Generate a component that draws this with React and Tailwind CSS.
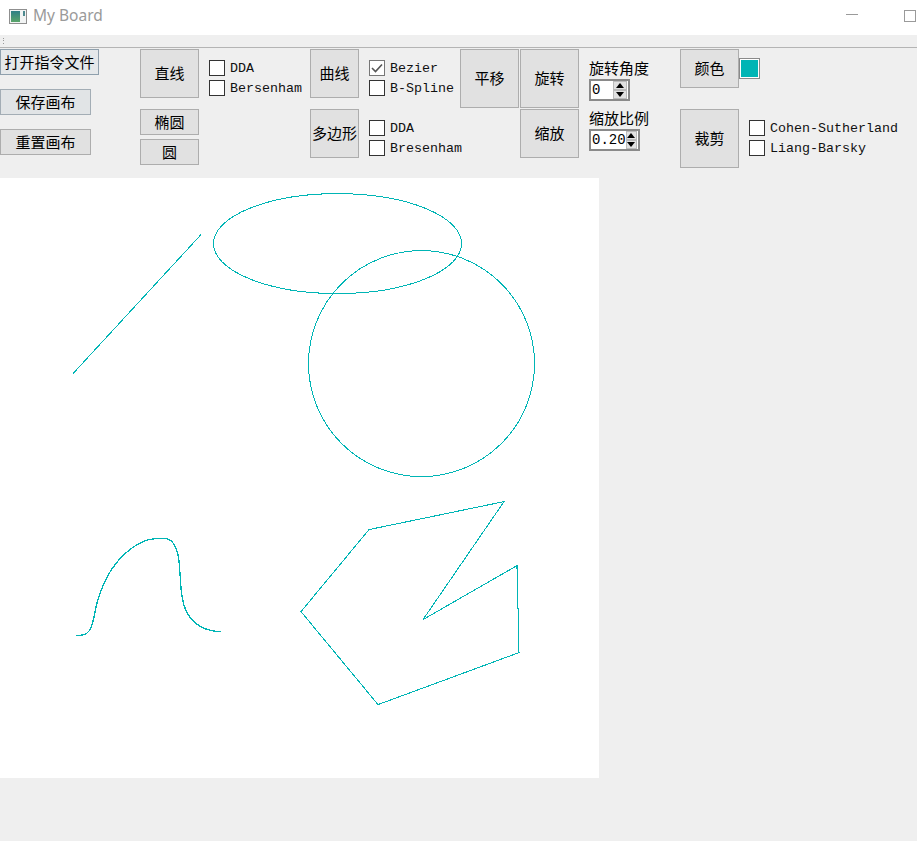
const zh = 'text-[15px] leading-none text-black [font-family:"Noto_Sans_CJK_SC",sans-serif]';

function Btn({ children, className = '' }) {
    return (
        <button className={`flex items-center justify-center border border-[#adadad] bg-[#e1e1e1] pb-[2px] ${zh} ${className}`}>
            {children}
        </button>
    );
}

function Check({ label, checked = false }) {
    return (
        <div className="flex h-5 items-center gap-[5px]">
            <span className={`flex h-4 w-4 shrink-0 items-center justify-center border bg-white ${checked ? 'border-[#777]' : 'border-[#333]'}`}>
                {checked && (
                    <svg width="12" height="10" viewBox="0 0 12 10" fill="none">
                        <path d="M1 5 L4.5 8.5 L11 1.5" stroke="#555" strokeWidth="1.6" />
                    </svg>
                )}
            </span>
            <span className='whitespace-nowrap pt-[2px] text-[13.33px] leading-none text-[#111] [font-family:"Liberation_Mono",monospace]'>{label}</span>
        </div>
    );
}

function Spin({ value, className = '' }) {
    return (
        <div className={`flex h-[22px] items-center justify-between border-2 border-[#8a8a8a] bg-white pr-px ${className}`}>
            <span className='pl-[1px] text-[14px] leading-none text-black [font-family:"Liberation_Mono",monospace]'>{value}</span>
            <span className="flex w-[14px] flex-col">
                <span className="flex h-[9px] items-center justify-center border border-[#bbb] bg-[#e1e1e1]">
                    <span className="h-0 w-0 border-x-[4px] border-b-[5px] border-x-transparent border-b-black" />
                </span>
                <span className="flex h-[9px] items-center justify-center border border-[#bbb] bg-[#e1e1e1]">
                    <span className="h-0 w-0 border-x-[4px] border-t-[5px] border-x-transparent border-t-black" />
                </span>
            </span>
        </div>
    );
}

export default function App() {
    return (
        <div className="flex h-[841px] w-[917px] flex-col overflow-hidden bg-[#efefef]">
            {/* Title bar */}
            <div className="flex h-[35px] shrink-0 items-center bg-white pb-[3px] pl-[9px] pr-px">
                <svg width="18" height="15" viewBox="0 0 18 15" className="shrink-0">
                    <defs>
                        <linearGradient id="ic" x1="0" y1="0" x2="0" y2="1">
                            <stop offset="0" stopColor="#2f7f86" />
                            <stop offset="1" stopColor="#5aa56a" />
                        </linearGradient>
                    </defs>
                    <rect x="0.5" y="0.5" width="17" height="14" fill="#f2f4f4" stroke="#8f8f8f" />
                    <rect x="2" y="2" width="9" height="11" fill="url(#ic)" />
                    <rect x="14" y="2" width="2" height="5" fill="#4d8a90" />
                </svg>
                <span className='ml-[6px] text-[15.5px] leading-none text-[#9a9a9a] [font-family:"Noto_Sans",sans-serif]'>My Board</span>
                <span className="ml-auto mr-[46px] -mt-1 h-px w-3 bg-[#9a9a9a]" />
                <span className="-mt-px h-3 w-3 border border-[#9a9a9a]" />
            </div>

            {/* Tool strip */}
            <div className="flex h-[13px] shrink-0 items-center border-b border-[#b4b4b4] pl-[3px]">
                <span className="flex flex-col gap-px">
                    <span className="h-px w-px bg-[#999]" />
                    <span className="h-px w-px bg-[#999]" />
                    <span className="mt-px h-px w-px bg-[#999]" />
                </span>
            </div>

            {/* Controls */}
            <div className="flex h-[130px] shrink-0 items-start pt-[1px]">
                <div className="flex w-[140px] shrink-0 flex-col items-start gap-[14px]">
                    <button className={`flex h-[26px] w-[99px] items-center justify-center border border-[#8fa0ad] bg-[#e5e8ea] pb-[2px] ${zh}`}>打开指令文件</button>
                    <button className={`flex h-[26px] w-[91px] items-center justify-center border border-[#a3adb5] bg-[#e1e4e6] pb-[2px] ${zh}`}>保存画布</button>
                    <Btn className="h-[26px] w-[91px]">重置画布</Btn>
                </div>

                <div className="flex w-[59px] shrink-0 flex-col">
                    <Btn className="h-[49px]">直线</Btn>
                    <Btn className="mt-[11px] h-[26px]">椭圆</Btn>
                    <Btn className="mt-[4px] h-[26px]">圆</Btn>
                </div>

                <div className="ml-[10px] w-[101px] shrink-0 pt-[9px]">
                    <Check label="DDA" />
                    <Check label="Bersenham" />
                </div>

                <div className="flex w-[49px] shrink-0 flex-col gap-[11px]">
                    <Btn className="h-[49px]">曲线</Btn>
                    <Btn className="h-[49px]">多边形</Btn>
                </div>

                <div className="ml-[10px] flex w-[91px] shrink-0 flex-col gap-[20px] pt-[9px]">
                    <div>
                        <Check label="Bezier" checked />
                        <Check label="B-Spline" />
                    </div>
                    <div>
                        <Check label="DDA" />
                        <Check label="Bresenham" />
                    </div>
                </div>

                <Btn className="h-[59px] w-[59px] shrink-0">平移</Btn>
                <div className="ml-px flex w-[59px] shrink-0 flex-col gap-px">
                    <Btn className="h-[59px]">旋转</Btn>
                    <Btn className="h-[49px]">缩放</Btn>
                </div>

                <div className="ml-[10px] w-[91px] shrink-0 pt-[11px]">
                    <div className={`${zh} h-[19px]`}>旋转角度</div>
                    <Spin value="0" className="w-[41px]" />
                    <div className={`${zh} mt-[9px] h-[19px]`}>缩放比例</div>
                    <Spin value="0.20" className="w-[51px]" />
                </div>

                <div className="flex w-[59px] shrink-0 flex-col gap-[21px]">
                    <Btn className="h-[39px]">颜色</Btn>
                    <Btn className="h-[59px]">裁剪</Btn>
                </div>

                <div className="shrink-0">
                    <div className="mt-[9px] h-[21px] w-[21px] border-2 border-[#8a8a8a] bg-[#00b5b5] outline outline-1 -outline-offset-2 outline-white" />
                    <div className="ml-[10px] mt-[39px]">
                        <Check label="Cohen-Sutherland" />
                        <Check label="Liang-Barsky" />
                    </div>
                </div>
            </div>

            {/* Canvas */}
            <svg width="599" height="600" viewBox="0 178 599 600" fill="none" stroke="#00b5b5" shapeRendering="crispEdges" className="block shrink-0 bg-white">
                <g transform="translate(0 0.6)">
                    <path d="M73 373 L201 234" />
                    <ellipse cx="337.5" cy="243" rx="124" ry="50" />
                    <circle cx="421.5" cy="363" r="113" />
                    <path d="M369 529 L504 501 L423 619 L517 565 L517.6 608 L518.4 608 L519 652 L378 704 L301 611 Z" strokeWidth="1.05" />
                    <path d="M76 635 C83 635 88 634 91 627 C95 617 95 605 100 593 C108 568 125 549 143 541 C152 537 160 538 166 538 C173 539 177 546 179 560 C181 580 180 597 186 610 C193 625 207 631 221 631" strokeWidth="1.3" />
                </g>
            </svg>
        </div>
    );
}
